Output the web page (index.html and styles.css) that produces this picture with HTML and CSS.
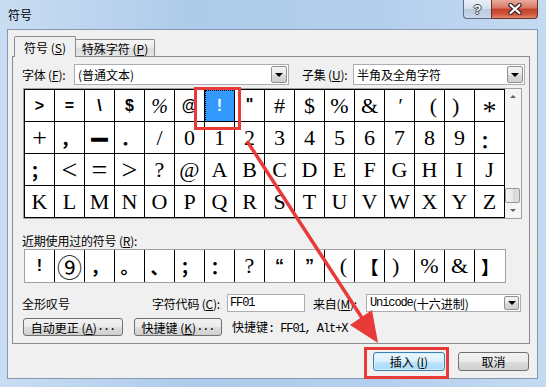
FILE: index.html
```html
<!DOCTYPE html>
<html lang="zh-CN">

<head>
    <meta charset="UTF-8">
    <meta name="viewport" content="width=device-width, initial-scale=1.0">
    <title>符号</title>
    <link rel="stylesheet" href="styles.css">
</head>

<body>
    <div class="window">
        <!-- title bar with the help and close buttons -->
        <div class="titlebar">
            <span class="title">符号</span>
            <div class="caption">
                <div class="cap-btn help">?</div>
                <div class="cap-btn close">
                    <svg width="16" height="12" viewBox="0 0 16 12">
                        <path d="M3.5 2 L12.5 10 M12.5 2 L3.5 10" stroke="#3a2a27" stroke-width="4.5" stroke-linecap="round" />
                        <path d="M3.5 2 L12.5 10 M12.5 2 L3.5 10" stroke="#fff" stroke-width="2.2" stroke-linecap="round" />
                    </svg>
                </div>
            </div>
        </div>

        <div class="client">
            <div class="tabs">
                <div class="tab tab-on">符号 (<u>S</u>)</div>
                <div class="tab tab-off">特殊字符 (<u>P</u>)</div>
            </div>

            <div class="panel">
                <div class="font-row">
                    <span class="lbl font-lbl">字体 (<u>F</u>):</span>
                    <div class="combo font-combo">
                        <span class="combo-text">(普通文本)</span>
                        <span class="drop"><i class="tri-down"></i></span>
                    </div>
                    <span class="lbl subset-lbl">子集 (<u>U</u>):</span>
                    <div class="combo subset-combo">
                        <span class="combo-text">半角及全角字符</span>
                        <span class="drop"><i class="tri-down"></i></span>
                    </div>
                </div>

                <div class="grid-box">
                    <div class="grid">
                        <!-- row 1 -->
                        <span class="b">&gt;</span>
                        <span class="b">=</span>
                        <span class="b">\</span>
                        <span class="b">$</span>
                        <span class="it">%</span>
                        <span class="b">@</span>
                        <span class="b sel">!</span>
                        <span class="b top">"</span>
                        <span>#</span>
                        <span>$</span>
                        <span>%</span>
                        <span>&amp;</span>
                        <span class="it">′</span>
                        <span class="r">(</span>
                        <span class="l">)</span>
                        <span class="ast">*</span>
                        <!-- row 2 -->
                        <span class="thin">+</span>
                        <span class="cj">，</span>
                        <span class="dash">－</span>
                        <span class="cj">．</span>
                        <span>/</span>
                        <span>0</span>
                        <span>1</span>
                        <span>2</span>
                        <span>3</span>
                        <span>4</span>
                        <span>5</span>
                        <span>6</span>
                        <span>7</span>
                        <span>8</span>
                        <span>9</span>
                        <span class="cj low">：</span>
                        <!-- row 3 -->
                        <span class="cj">；</span>
                        <span class="m">&lt;</span>
                        <span class="m">=</span>
                        <span class="m">&gt;</span>
                        <span>?</span>
                        <span>@</span>
                        <span>A</span>
                        <span>B</span>
                        <span>C</span>
                        <span>D</span>
                        <span>E</span>
                        <span>F</span>
                        <span>G</span>
                        <span>H</span>
                        <span>I</span>
                        <span>J</span>
                        <!-- row 4 -->
                        <span>K</span>
                        <span>L</span>
                        <span>M</span>
                        <span>N</span>
                        <span>O</span>
                        <span>P</span>
                        <span>Q</span>
                        <span>R</span>
                        <span>S</span>
                        <span>T</span>
                        <span>U</span>
                        <span>V</span>
                        <span>W</span>
                        <span>X</span>
                        <span>Y</span>
                        <span>Z</span>
                    </div>
                    <div class="vscroll">
                        <div class="sb-btn"><i class="tri-up"></i></div>
                        <div class="sb-track"><div class="sb-thumb"></div></div>
                        <div class="sb-btn"><i class="tri-down small"></i></div>
                    </div>
                </div>

                <div class="recent-lbl">近期使用过的符号 (<u>R</u>):</div>
                <div class="recent">
                    <span class="b">!</span>
                    <span class="circ">⑨</span>
                    <span class="cj">，</span>
                    <span class="cj">。</span>
                    <span class="cj">、</span>
                    <span class="cj">；</span>
                    <span class="cj">：</span>
                    <span>?</span>
                    <span class="b top">“</span>
                    <span class="b top">”</span>
                    <span class="r">(</span>
                    <span class="cj">【</span>
                    <span class="l">)</span>
                    <span>%</span>
                    <span>&amp;</span>
                    <span class="cj">】</span>
                </div>

                <div class="info-row">
                    <span class="char-name">全形叹号</span>
                    <span class="lbl code-lbl">字符代码 (<u>C</u>):</span>
                    <span class="field"><span class="mono">FF01</span></span>
                    <span class="lbl from-lbl">来自(<u>M</u>):</span>
                    <div class="combo from-combo">
                        <span class="combo-text"><span class="mono">Unicode</span>(十六进制)</span>
                        <span class="drop"><i class="tri-down"></i></span>
                    </div>
                </div>

                <div class="btn-row">
                    <div class="btn auto-btn">自动更正 (<u>A</u>)<span class="mono">...</span></div>
                    <div class="btn key-btn">快捷键 (<u>K</u>)<span class="mono">...</span></div>
                    <span class="shortcut">快捷键<span class="mono">: FF01, Alt+X</span></span>
                </div>
            </div>

            <div class="actions">
                <div class="btn btn-default insert-btn">插入 (<u>I</u>)</div>
                <div class="btn cancel-btn">取消</div>
            </div>
        </div>

        <!-- red marks drawn over the screenshot -->
        <svg class="marks" width="546" height="387" viewBox="0 0 546 387">
            <rect x="195.5" y="88.5" width="44" height="40" fill="none" stroke="#e93a3a" stroke-width="3" />
            <line x1="247" y1="141" x2="364" y2="321" stroke="#e93a3a" stroke-width="3.5" />
            <polygon points="378,343 350,325 372,310" fill="#e93a3a" />
            <rect x="365.5" y="348.5" width="82" height="29" fill="none" stroke="#e93a3a" stroke-width="3" />
        </svg>
    </div>
</body>

</html>
```

FILE: styles.css
```css
body {
    margin: 0;
    font-family: "Noto Sans CJK SC", "Liberation Sans", sans-serif;
    font-size: 12px;
    color: #000;
}

u {
    text-decoration: underline;
}

.mono {
    font-family: "Liberation Mono", monospace;
    font-size: 12px;
    letter-spacing: -1.1px;
}

/* window frame */
.window {
    position: relative;
    width: 546px;
    height: 387px;
    box-sizing: border-box;
    padding: 0 8px 8px 7px;
    display: flex;
    flex-direction: column;
    background: linear-gradient(to right, #c9ddf2 0%, #aecbeb 35%, #b4cfee 70%, #c4daf1 100%);
    overflow: hidden;
}

.titlebar {
    height: 29px;
    flex-shrink: 0;
    display: flex;
}

.title {
    margin: 6px 0 0 1px;
    font-size: 12px;
    line-height: 17px;
}

.caption {
    margin-left: auto;
    display: flex;
    height: 19px;
}

.cap-btn {
    height: 19px;
    box-sizing: border-box;
    display: flex;
    align-items: center;
    justify-content: center;
    border: 1px solid #5d6e86;
    border-top: none;
}

.help {
    width: 28px;
    border-right: none;
    border-radius: 0 0 0 4px;
    background: linear-gradient(#e8eff8, #d3dfec 50%, #b9cadf 51%, #c9d8ea);
    color: #fff;
    font: bold 13px "Liberation Sans", sans-serif;
    text-shadow: 1px 0 #3b3b3b, -1px 0 #3b3b3b, 0 1px #3b3b3b, 0 -1px #3b3b3b;
}

.close {
    width: 47px;
    border-color: #6a2f25;
    border-radius: 0 0 4px 0;
    background: linear-gradient(#eaab9e, #d87563 45%, #c4412b 50%, #d0563b 80%, #e28c70);
}

/* client area */
.client {
    flex: 1;
    display: flex;
    flex-direction: column;
    padding: 6px 7px 0 4px;
    background: #f0f0f0;
    border: 1px solid #8599b2;
}

.tabs {
    display: flex;
    align-items: flex-end;
    height: 20px;
    padding-left: 2px;
    position: relative;
    z-index: 1;
}

.tab {
    box-sizing: border-box;
    border: 1px solid #898c95;
    border-bottom: none;
    display: flex;
    align-items: center;
    justify-content: center;
    padding-top: 1px;
    white-space: pre;
}

.tab-on {
    width: 62px;
    height: 21px;
    margin-bottom: -1px;
    background: #f0f0f0;
    border-radius: 2px 2px 0 0;
}

.tab-off {
    width: 79px;
    height: 17px;
    border-left: none;
    border-radius: 0 2px 0 0;
    background: linear-gradient(#f4f4f4, #ebebeb 50%, #dcdcdc 51%, #e4e4e4);
}

.panel {
    height: 288px;
    box-sizing: border-box;
    border: 1px solid #898c95;
    padding: 7px 0 0 9px;
    background: #f0f0f0;
}

.lbl {
    white-space: nowrap;
    letter-spacing: -0.2px;
}

.font-row {
    display: flex;
    align-items: center;
    height: 21px;
}

.font-lbl {
    width: 52px;
}

.subset-lbl {
    width: 51px;
    margin-left: 13px;
}

.combo {
    box-sizing: border-box;
    display: flex;
    align-items: stretch;
    border: 1px solid #abadb3;
    background: #fff;
}

.font-combo {
    width: 215px;
    height: 21px;
}

.subset-combo {
    width: 172px;
    height: 21px;
}

.combo-text {
    flex: 1;
    padding-left: 3px;
    display: flex;
    align-items: center;
    white-space: nowrap;
}

.drop {
    width: 16px;
    margin: 1px;
    box-sizing: border-box;
    border: 1px solid #8e8f8f;
    border-radius: 2px;
    background: linear-gradient(#f5f5f5, #e9e9e9 50%, #d9d9d9 51%, #d0d0d0);
    display: flex;
    align-items: center;
    justify-content: center;
}

.tri-down {
    width: 0;
    height: 0;
    border-left: 4px solid transparent;
    border-right: 4px solid transparent;
    border-top: 4px solid #000;
}

.tri-down.small {
    border-left-width: 3px;
    border-right-width: 3px;
    border-top: 3px solid #606060;
}

.tri-up {
    width: 0;
    height: 0;
    border-left: 3px solid transparent;
    border-right: 3px solid transparent;
    border-bottom: 3px solid #606060;
}

/* symbol grid */
.grid-box {
    display: flex;
    width: 499px;
    box-sizing: border-box;
    margin: 3px 0 0 1px;
    border: 1px solid #a0a0a0;
}

.grid {
    display: grid;
    grid-template-columns: repeat(16, 30px);
    grid-auto-rows: 32px;
    border-left: 1px solid #000;
    border-top: 1px solid #000;
    background: #fff;
}

.grid span,
.recent span {
    box-sizing: border-box;
    display: flex;
    align-items: center;
    justify-content: center;
    border-right: 1px solid #000;
    font-family: "Liberation Serif", serif;
    font-size: 22px;
    line-height: 1;
}

.grid span {
    border-bottom: 1px solid #000;
}

.grid .b,
.recent .b {
    font-family: "Liberation Sans", sans-serif;
    font-weight: bold;
    font-size: 16px;
}

.grid .it {
    font-style: italic;
    font-size: 20px;
}

.grid .top,
.recent .top {
    align-items: flex-start;
    padding-top: 7px;
}

.recent .top {
    font-size: 18px;
}

.grid .r,
.recent .r {
    justify-content: flex-end;
    padding-right: 7px;
}

.grid .l,
.recent .l {
    justify-content: flex-start;
    padding-left: 7px;
}

.grid .ast {
    font-size: 28px;
    padding-top: 10px;
}

.grid .thin {
    font-size: 26px;
}

.grid .m {
    font-size: 28px;
}

.grid .cj,
.recent .cj {
    font-family: "Noto Sans CJK SC", sans-serif;
    font-weight: bold;
    font-size: 18px;
}

.grid .low {
    padding-top: 4px;
}

.grid .dash {
    font-family: "Noto Sans CJK SC", sans-serif;
    font-weight: 900;
    font-size: 22px;
    -webkit-text-stroke: 1.5px #000;
}

.grid .sel {
    background: #3399ff;
    color: #fff;
    outline: 1px dotted #000;
    outline-offset: -1px;
}

.vscroll {
    width: 16px;
    display: flex;
    flex-direction: column;
    background: #f5f5f5;
}

.sb-btn {
    height: 15px;
    display: flex;
    align-items: center;
    justify-content: center;
}

.sb-track {
    flex: 1;
    display: flex;
    flex-direction: column;
    justify-content: flex-end;
}

.sb-thumb {
    height: 15px;
    box-sizing: border-box;
    margin-right: 1px;
    border: 1px solid #979797;
    border-radius: 2px;
    background: linear-gradient(to right, #f6f6f6, #e8e8e8 50%, #d8d8d8 51%, #dedede);
}

/* recently used symbols */
.recent-lbl {
    margin-top: 14px;
    height: 16px;
    line-height: 16px;
    letter-spacing: -0.2px;
}

.recent {
    display: flex;
    width: 482px;
    height: 34px;
    box-sizing: border-box;
    margin-left: 2px;
    border: 1px solid #a0a0a0;
    background: #fff;
}

.recent span {
    width: 30px;
}

.recent span:last-child {
    border-right: none;
}

.recent .circ {
    font-family: "Noto Sans CJK SC", sans-serif;
    font-size: 25px;
}

/* character info */
.info-row {
    display: flex;
    align-items: center;
    height: 18px;
    margin-top: 11px;
}

.char-name {
    width: 130px;
}

.code-lbl {
    width: 75px;
}

.field {
    width: 78px;
    height: 18px;
    box-sizing: border-box;
    border: 1px solid #abadb3;
    background: #fff;
    padding-left: 2px;
    display: flex;
    align-items: center;
}

.from-lbl {
    width: 53px;
    margin-left: 8px;
}

.from-combo {
    width: 155px;
    height: 18px;
}

.from-combo .drop {
    width: 15px;
}

.btn-row {
    display: flex;
    align-items: center;
    height: 18px;
    margin-top: 6px;
}

.btn {
    box-sizing: border-box;
    border: 1px solid #707070;
    border-radius: 3px;
    background: linear-gradient(#f2f2f2, #ebebeb 50%, #dddddd 51%, #cfcfcf);
    display: flex;
    align-items: center;
    justify-content: center;
    white-space: pre;
}

.auto-btn {
    width: 100px;
    height: 18px;
    margin-left: 1px;
}

.key-btn {
    width: 88px;
    height: 18px;
    margin-left: 11px;
}

.shortcut {
    margin-left: 10px;
}

/* dialog buttons */
.actions {
    display: flex;
    justify-content: flex-end;
    gap: 13px;
    margin: 8px 1px 0 0;
}

.insert-btn {
    width: 72px;
    height: 19px;
}

.cancel-btn {
    width: 71px;
    height: 19px;
}

.btn-default {
    border-color: #3c7fb1;
    background: linear-gradient(#eaf6fd, #d9f0fc 50%, #bee6fd 51%, #a7d9f5);
    box-shadow: inset 0 0 0 1px #d6f0fc;
}

.marks {
    position: absolute;
    left: 0;
    top: 0;
    pointer-events: none;
}
```
